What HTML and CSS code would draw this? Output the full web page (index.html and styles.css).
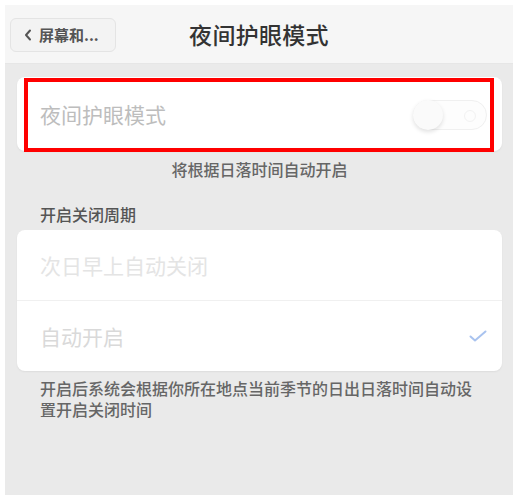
FILE: index.html
```html
<!DOCTYPE html>
<html lang="zh-CN">
<head>
<meta charset="utf-8">
<title>夜间护眼模式</title>
<link rel="stylesheet" href="styles.css">
</head>
<body>
<div class="screen">
  <header class="nav">
    <div class="nav-left">
      <button class="back"><svg class="chev" width="8" height="12" viewBox="0 0 8 12"><path d="M6 1.5 L2 6 L6 10.5" fill="none" stroke="#555" stroke-width="2" stroke-linecap="round" stroke-linejoin="round"/></svg><span>屏幕和...</span></button>
    </div>
    <h1 class="title">夜间护眼模式</h1>
    <div class="nav-right"></div>
  </header>
  <main class="content">
    <section class="card card-toggle">
      <span class="label">夜间护眼模式</span>
      <span class="toggle"><span class="knob"></span><span class="dot"></span></span>
      <span class="highlight"></span>
    </section>
    <p class="caption">将根据日落时间自动开启</p>
    <p class="section-title">开启关闭周期</p>
    <section class="card list">
      <div class="row"><span class="row-text faint">次日早上自动关闭</span></div>
      <div class="divider"></div>
      <div class="row"><span class="row-text">自动开启</span><svg class="check" width="18" height="12" viewBox="0 0 18 12"><path d="M1.5 6.5 L6 10.5 L16.5 1.5" fill="none" stroke="#a9c3ef" stroke-width="2" stroke-linecap="round" stroke-linejoin="round"/></svg></div>
    </section>
    <p class="footer">开启后系统会根据你所在地点当前季节的日出日落时间自动设置开启关闭时间</p>
  </main>
</div>
</body>
</html>
```
FILE: styles.css
```css
html, body {
  margin: 0;
  padding: 0;
  background: #ffffff;
}
body {
  font-family: "Noto Sans CJK SC", "Noto Sans", sans-serif;
}
.screen {
  margin: 5px 7px 0 5px;
  height: 490px;
  background: #eaeaea;
  display: flex;
  flex-direction: column;
}
.nav {
  height: 59px;
  background: #f6f6f6;
  display: grid;
  grid-template-columns: 1fr auto 1fr;
  align-items: center;
  border-bottom: 1px solid #e6e6e6;
  box-sizing: border-box;
}
.nav-left {
  padding-left: 5px;
}
.back {
  width: 106px;
  height: 34px;
  margin-top: 1px;
  border: 1px solid #e4e4e4;
  border-radius: 6px;
  background: #f3f3f3;
  display: flex;
  align-items: center;
  gap: 7px;
  padding: 0 0 0 13px;
  box-sizing: border-box;
  font-family: inherit;
  font-size: 15px;
  font-weight: 700;
  color: #555;
}
.chev {
  flex: none;
}
.title {
  margin: 0;
  font-size: 23px;
  font-weight: 500;
  color: #333;
  letter-spacing: 0.3px;
}
.content {
  padding: 13px 11px 0 12px;
}
.card {
  background: #fff;
  border-radius: 8px;
  box-shadow: 0 1px 2px rgba(0,0,0,0.06);
}
.card-toggle {
  position: relative;
  height: 74px;
  display: flex;
  align-items: center;
  justify-content: space-between;
  padding: 0 15px 0 23px;
}
.label {
  font-size: 21px;
  color: #bdbdbd;
}
.toggle {
  position: relative;
  width: 74px;
  height: 30px;
  border-radius: 15px;
  border: 1px solid #f0f0f0;
  box-sizing: border-box;
  background: #fdfdfd;
  margin-top: 1px;
}
.knob {
  position: absolute;
  left: -1px;
  top: -1px;
  width: 30px;
  height: 30px;
  border-radius: 50%;
  background: #fafafa;
  box-shadow: 0 2px 4px rgba(0,0,0,0.12);
}
.dot {
  position: absolute;
  right: 10px;
  top: 9px;
  width: 10px;
  height: 10px;
  border-radius: 50%;
  border: 1px solid #f2f2f2;
}
.highlight {
  position: absolute;
  left: 7px;
  right: 8px;
  top: 1px;
  bottom: -1px;
  border: 4px solid #ff0000;
  box-sizing: border-box;
  pointer-events: none;
}
.caption {
  margin: 8px 0 0;
  text-align: center;
  font-size: 16px;
  font-weight: 500;
  line-height: 20px;
  color: #666;
}
.section-title {
  margin: 25px 0 0;
  padding-left: 23px;
  font-size: 16px;
  font-weight: 500;
  line-height: 20px;
  color: #555;
}
.list {
  margin-top: 6px;
}
.row {
  height: 70px;
  display: flex;
  align-items: center;
  justify-content: space-between;
  padding: 0 15px 0 23px;
}
.row-text {
  font-size: 21px;
  color: #d9d9d9;
}
.row-text.faint {
  color: #e4e4e4;
}
.divider {
  height: 1px;
  background: #f0f0f0;
}
.footer {
  margin: 7px 0 0;
  padding: 0 22px 0 23px;
  font-size: 16px;
  font-weight: 500;
  line-height: 21px;
  color: #666;
}
```
